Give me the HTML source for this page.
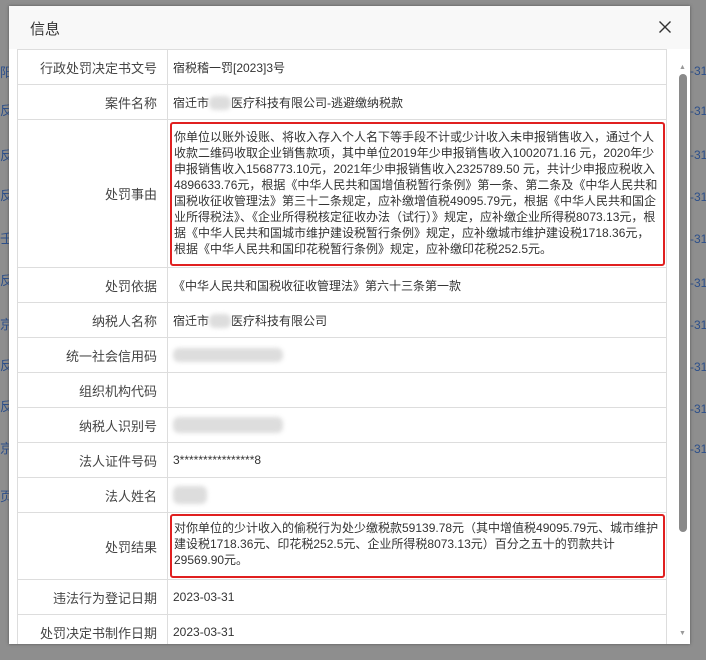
<!DOCTYPE html>
<html><head><meta charset="utf-8"><style>
*{margin:0;padding:0;box-sizing:border-box}
body{width:706px;height:660px;background:#8e8e8e;position:relative;overflow:hidden;font-family:"Liberation Sans","Noto Sans CJK SC","WenQuanYi Zen Hei",sans-serif;color:#333}
.side{position:absolute;font-size:13px;color:#2c4f8a}
.dlg{position:absolute;left:9px;top:6px;width:681px;height:638px;background:#fff;box-shadow:0 0 3px #555;overflow:hidden}
.hd{height:43px;background:#f8f8f8;position:relative;font-size:15px;color:#333;padding:12px 0 0 21px}
.x{position:absolute;right:19px;top:15px}
table{position:absolute;left:8px;top:43px;width:650px;border-collapse:collapse;font-size:12px}
td{border:1px solid #ddd;height:35px}
td.l{width:150px;text-align:right;padding-right:10px;font-size:13px;color:#444}
td.v{padding-left:5px;color:#333}
.red{border:2px solid #e02020;border-radius:3px;padding:2px 2px;line-height:16px;margin:0 -1px 0 -3px}
.blur{display:inline-block;background:#ddd;border-radius:6px;vertical-align:middle;filter:blur(2px)}
.sb{position:absolute;left:667px;top:58px;width:12px;height:580px}
.thumb{position:absolute;left:3px;top:10px;width:8px;height:458px;background:#8a8a8a;border-radius:4px}
</style></head><body>
<div class="side" style="left:0;top:62px">阳</div>
<div class="side" style="left:0;top:100px">反</div>
<div class="side" style="left:0;top:145px">反</div>
<div class="side" style="left:0;top:185px">反</div>
<div class="side" style="left:0;top:228px">壬</div>
<div class="side" style="left:0;top:270px">反</div>
<div class="side" style="left:0;top:314px">京</div>
<div class="side" style="left:0;top:355px">反</div>
<div class="side" style="left:0;top:396px">反</div>
<div class="side" style="left:0;top:438px">京</div>
<div class="side" style="left:0;top:486px">页</div>
<div class="side" style="left:690px;top:64px;font-size:12px">-31</div>
<div class="side" style="left:690px;top:104px;font-size:12px">-31</div>
<div class="side" style="left:690px;top:148px;font-size:12px">-31</div>
<div class="side" style="left:690px;top:190px;font-size:12px">-31</div>
<div class="side" style="left:690px;top:232px;font-size:12px">-31</div>
<div class="side" style="left:690px;top:276px;font-size:12px">-31</div>
<div class="side" style="left:690px;top:318px;font-size:12px">-31</div>
<div class="side" style="left:690px;top:360px;font-size:12px">-31</div>
<div class="side" style="left:690px;top:402px;font-size:12px">-31</div>
<div class="side" style="left:690px;top:442px;font-size:12px">-31</div>
<div class="dlg">
<div class="hd">信息<svg class="x" width="12" height="12" viewBox="0 0 12 12"><path d="M0.5 0.5L11.5 11.5M11.5 0.5L0.5 11.5" stroke="#333" stroke-width="1.4"/></svg></div>
<table>
<tr><td class="l">行政处罚决定书文号</td><td class="v">宿税稽一罚[2023]3号</td></tr>
<tr><td class="l" style="height:34px">案件名称</td><td class="v">宿迁市<span class="blur" style="width:22px;height:14px"></span>医疗科技有限公司-逃避缴纳税款</td></tr>
<tr><td class="l" style="height:148px">处罚事由</td><td class="v" style="padding:0 2px 0 5px"><div class="red" style="padding:5px 2px 6px 2px;height:144px">你单位以账外设账、将收入存入个人名下等手段不计或少计收入未申报销售收入，通过个人收款二维码收取企业销售款项，其中单位2019年少申报销售收入1002071.16 元，2020年少申报销售收入1568773.10元，2021年少申报销售收入2325789.50 元，共计少申报应税收入4896633.76元，根据《中华人民共和国增值税暂行条例》第一条、第二条及《中华人民共和国税收征收管理法》第三十二条规定，应补缴增值税49095.79元，根据《中华人民共和国企业所得税法》、《企业所得税核定征收办法（试行）》规定，应补缴企业所得税8073.13元，根据《中华人民共和国城市维护建设税暂行条例》规定，应补缴城市维护建设税1718.36元，根据《中华人民共和国印花税暂行条例》规定，应补缴印花税252.5元。</div></td></tr>
<tr><td class="l">处罚依据</td><td class="v">《中华人民共和国税收征收管理法》第六十三条第一款</td></tr>
<tr><td class="l">纳税人名称</td><td class="v">宿迁市<span class="blur" style="width:22px;height:14px"></span>医疗科技有限公司</td></tr>
<tr><td class="l">统一社会信用码</td><td class="v"><span class="blur" style="width:110px;height:14px"></span></td></tr>
<tr><td class="l">组织机构代码</td><td class="v"></td></tr>
<tr><td class="l">纳税人识别号</td><td class="v"><span class="blur" style="width:110px;height:16px"></span></td></tr>
<tr><td class="l">法人证件号码</td><td class="v">3****************8</td></tr>
<tr><td class="l">法人姓名</td><td class="v"><span class="blur" style="width:34px;height:18px"></span></td></tr>
<tr><td class="l" style="height:67px">处罚结果</td><td class="v" style="padding:0 2px 0 5px"><div class="red" style="height:64px;padding:4px 2px">对你单位的少计收入的偷税行为处少缴税款59139.78元（其中增值税49095.79元、城市维护建设税1718.36元、印花税252.5元、企业所得税8073.13元）百分之五十的罚款共计29569.90元。</div></td></tr>
<tr><td class="l">违法行为登记日期</td><td class="v">2023-03-31</td></tr>
<tr><td class="l">处罚决定书制作日期</td><td class="v">2023-03-31</td></tr>
</table>
<div class="sb"><div style="position:absolute;left:3px;top:0;font-size:7px;color:#999">▲</div><div class="thumb"></div><div style="position:absolute;left:3px;top:566px;font-size:7px;color:#999">▼</div></div>
</div>
</body></html>
